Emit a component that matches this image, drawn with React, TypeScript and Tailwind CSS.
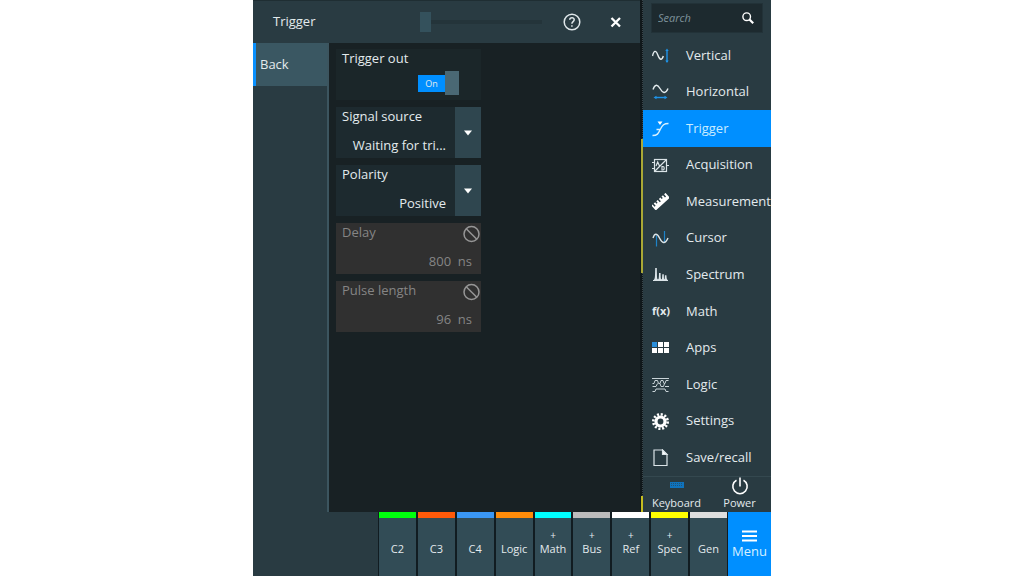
import { useState, type ReactNode } from 'react'
import { clsx } from 'clsx'

const icons: Record<string, ReactNode> = {
    vertical: (
        <g fill="none" strokeWidth="1.4">
            <path d="M0.5 9C2 3 4 3 5.800 8s4 6 5.500 1" stroke="#e4ecef" />
            <path d="M15 3v12" stroke="#1e93e8" />
            <path d="M13.300 4L15 1.500 16.700 4zM13.300 13.500l1.700 2.500 1.700-2.500z" fill="#1e93e8" stroke="none" />
        </g>
    ),
    horizontal: (
        <g fill="none" strokeWidth="1.4">
            <path d="M1 6.500C3 1 5.500 1 8 5.500s5.500 6 8 0" stroke="#e4ecef" />
            <path d="M3 14.500h11" stroke="#1e93e8" />
            <path d="M4.500 12.700L1.500 14.500l3 1.800zM12.500 12.700l3 1.800-3 1.800z" fill="#1e93e8" stroke="none" />
        </g>
    ),
    trigger: (
        <g>
            <path d="M0.5 15.500c5.500 0 6-2.500 8-6.500s3.500-5.500 8-5.500M4.500 9.500h4" fill="none" stroke="#d8f1ff" strokeWidth="1.400" />
            <path d="M5.500 1.500h5L8 5z" fill="#fff" />
        </g>
    ),
    acquisition: (
        <g fill="none" stroke="#dbe4e8" strokeWidth="1.200">
            <rect x="2.500" y="2.500" width="12" height="12" />
            <path d="M2.500 14.500l12-12M0 5.500h2.500M0 11.500h2.500M14.500 8.500H17M4 9l1.700-4L7.500 9M10 9.500v3.500h1c1.600 0 1.600-3.500 0-3.500z" />
        </g>
    ),
    measurement: (
        <g transform="rotate(-42 8.500 8.500)">
            <path d="M-1 5.500h1.500v3H2v-3h2v2h1.500v-2h2v3H9v-3h2v2h1.500v-2h2v3H16v-3h2V12H-1z" fill="#fff" />
        </g>
    ),
    cursor: (
        <g fill="none">
            <path d="M4.500 5.500v11M12.500 1v11" stroke="#1e83c8" strokeWidth="1.200" />
            <path d="M1 8C2.500 3 5 3 7.500 8s5.500 7 8.500 0" stroke="#dbe4e8" strokeWidth="1.400" />
        </g>
    ),
    spectrum: (
        <g fill="#dbe4e8">
            <path d="M1 14c2 0 2-2 2.200-12h1.600C5 12.500 5 13 6 13.300c.8 0 .9-1 1-6.300h1.600c.1 5 .2 6.300.9 6.300.6 0 .6-2 .8-5h1.500c.1 4 .2 5 .6 5 .3 0 .4-1 .5-4h1.500c.2 3.500.6 4.700 1.600 4.700v1H1z" />
        </g>
    ),
    apps: (
        <g fill="#fff">
            <rect x="0" y="3" width="5" height="5" fill="#2a8fdc" />
            <rect x="6" y="3" width="5" height="5" />
            <rect x="12" y="3" width="5" height="5" />
            <rect x="0" y="9" width="5" height="5" />
            <rect x="6" y="9" width="5" height="5" />
            <rect x="12" y="9" width="5" height="5" />
        </g>
    ),
    logic: (
        <g fill="none" stroke="#c9d4d8">
            <path d="M0 2.500h17M0.500 7.500H2l1-3h2.500l1 3H8l1-3h2l1 3h1l1-3h2.500M0.500 10.500h3.500l1.500-3M8 7.500l1 3h2.500l1-3M13 10.500h4M0.500 15.500H3l1-2.500h9l1 2.500h2.500" />
        </g>
    ),
    settings: (
        <g fill="none" stroke="#fff">
            <circle cx="8.500" cy="8.500" r="4.500" strokeWidth="3.200" />
            <circle cx="8.500" cy="8.500" r="7.200" strokeWidth="2.600" strokeDasharray="2.070 1.700" />
        </g>
    ),
    save: (
        <g fill="none" stroke="#dbe4e8" strokeWidth="1.200">
            <path d="M2 1h8.500L15 5.500V16.500H2z" />
            <path d="M10.500 1v4.500H15z" fill="#fff" />
        </g>
    ),
}

const menuItems = [
    { name: 'Vertical', icon: 'vertical' },
    { name: 'Horizontal', icon: 'horizontal' },
    { name: 'Trigger', icon: 'trigger' },
    { name: 'Acquisition', icon: 'acquisition' },
    { name: 'Measurement', icon: 'measurement' },
    { name: 'Cursor', icon: 'cursor' },
    { name: 'Spectrum', icon: 'spectrum' },
    { name: 'Math', icon: 'math' },
    { name: 'Apps', icon: 'apps' },
    { name: 'Logic', icon: 'logic' },
    { name: 'Settings', icon: 'settings' },
    { name: 'Save/recall', icon: 'save' },
]

const channels = [
    { name: 'C2', color: 'bg-[#00ff0d]' },
    { name: 'C3', color: 'bg-[#ff5a0a]' },
    { name: 'C4', color: 'bg-[#3a97f5]' },
    { name: 'Logic', color: 'bg-[#ff8c0a]' },
    { name: 'Math', color: 'bg-[#00ffff]', add: true },
    { name: 'Bus', color: 'bg-[#bcbcbc]', add: true },
    { name: 'Ref', color: 'bg-white', add: true },
    { name: 'Spec', color: 'bg-[#ffff00]', add: true },
    { name: 'Gen', color: 'bg-[#dedede]' },
]

function SelectField({ id, label, options }: { id: string; label: string; options: string[] }) {
    return (
        <div className="flex h-[51px] bg-[#1d2a2f]">
            <div className="flex min-w-0 flex-1 flex-col">
                <label htmlFor={id} className="pl-1.5 leading-[18px]">{label}</label>
                <select
                    id={id}
                    className="mt-2 h-6 w-full appearance-none bg-transparent pr-[9px] leading-6 outline-none [text-align-last:right]"
                >
                    {options.map((o) => <option key={o}>{o}</option>)}
                </select>
            </div>
            <div className="flex w-[26px] items-center justify-center bg-[#2f464f]">
                <svg className="h-1.5 w-2" viewBox="0 0 8 6"><path d="M0 0.500h8L4 5.500z" fill="#fff" /></svg>
            </div>
        </div>
    )
}

function DisabledField({ id, label, value }: { id: string; label: string; value: string }) {
    return (
        <div className="flex h-[51px] flex-col bg-[#303030] text-[#858585]">
            <div className="flex h-[18px] justify-between pl-1.5">
                <label htmlFor={id} className="leading-[18px]">{label}</label>
                <svg className="mt-0.5 h-[18px] w-[18px]" viewBox="0 0 18 18" fill="none" stroke="#969696" strokeWidth="1.500">
                    <circle cx="8.500" cy="9" r="7.500" />
                    <path d="M3.200 3.700l10.600 10.600" />
                </svg>
            </div>
            <input id={id} disabled value={value} readOnly className="mt-2 h-6 w-full bg-transparent pr-[9px] text-right" />
        </div>
    )
}

function Panel() {
    const [on, setOn] = useState(true)

    return (
        <div className="flex min-w-0 flex-1 flex-col">
            <header className="flex h-[43px] items-center border-t border-[#1f2e33] bg-[#293b42] pl-5 pr-3.5">
                <h1 className="flex-1">Trigger</h1>
                <input
                    type="range"
                    aria-label="Transparency"
                    defaultValue={0}
                    className="h-[22px] w-[122px] appearance-none bg-transparent [&::-webkit-slider-runnable-track]:h-1 [&::-webkit-slider-runnable-track]:bg-[#24343a] [&::-webkit-slider-thumb]:-mt-2 [&::-webkit-slider-thumb]:h-5 [&::-webkit-slider-thumb]:w-[11px] [&::-webkit-slider-thumb]:appearance-none [&::-webkit-slider-thumb]:bg-[#34515c]"
                />
                <button aria-label="Help" className="ml-5">
                    <svg className="h-5 w-5" viewBox="0 0 20 20" fill="none" stroke="#dfe7ea" strokeWidth="1.500">
                        <circle cx="10" cy="10" r="7.800" />
                        <path d="M7.700 7.700C7.900 5 12.300 5 12.200 7.800c0 1.800-2.300 1.900-2.300 4" />
                        <path d="M9.900 13.200v1.600" />
                    </svg>
                </button>
                <button aria-label="Close" className="ml-6">
                    <svg className="h-5 w-5" viewBox="0 0 20 20" fill="none" stroke="#fff" strokeWidth="2.300">
                        <path d="M5.500 6l8.500 8.500M14 6L5.500 14.500" />
                    </svg>
                </button>
            </header>
            <div className="flex flex-1">
                <nav className="w-[76px] border-r-2 border-[#3c555f] bg-[#293b42]">
                    <button className="h-[43px] w-full border-l-[3px] border-[#0a91ff] bg-[#3a5762] pl-1 text-left">Back</button>
                </nav>
                <main className="flex-1 bg-[#182124] px-[7px] py-1.5">
                    <div className="flex w-[145px] flex-col gap-[7px]">
                        <div className="h-[51px] bg-[#1b2629] pl-1.5">
                            <label htmlFor="trigger-out" className="block leading-[18px]">Trigger out</label>
                            <label className="ml-[76px] mt-1 flex h-6 w-fit items-center">
                                <input
                                    id="trigger-out"
                                    type="checkbox"
                                    className="sr-only"
                                    checked={on}
                                    onChange={() => setOn(!on)}
                                />
                                <span className="h-[17px] w-[27px] bg-[#008fff] text-center text-[9px] leading-[17px]">
                                    {on ? 'On' : 'Off'}
                                </span>
                                <span className="h-6 w-3.5 bg-[#4a6874]" />
                            </label>
                        </div>
                        <SelectField id="source" label="Signal source" options={['Waiting for tri...']} />
                        <SelectField id="polarity" label="Polarity" options={['Positive', 'Negative']} />
                        <DisabledField id="delay" label="Delay" value="800  ns" />
                        <DisabledField id="pulse" label="Pulse length" value="96  ns" />
                    </div>
                </main>
            </div>
        </div>
    )
}

// sliver of the waveform display left visible between the panel and the menu
function Trace() {
    return (
        <div className="flex w-[3px] flex-col bg-[#10181b]">
            <div className="flex-[139] border-r border-dotted border-[#3b474c]" />
            <div className="flex-[134] border-r-2 border-[#a9a835]" />
            <div className="flex-[223] border-r border-dotted border-[#3b474c]" />
            <div className="flex-[16] border-r-2 border-[#c5bd20]" />
        </div>
    )
}

function SideMenu() {
    const [active, setActive] = useState('Trigger')

    return (
        <aside className="flex w-32 flex-col bg-[#293b42]">
            <div className="px-2 pb-1 pt-[3px]">
                <div className="flex h-[30px] items-center border border-[#223238] bg-[#1d2a2f] pl-1.5 pr-2">
                    <input
                        type="search"
                        aria-label="Search"
                        placeholder="Search"
                        className="min-w-0 flex-1 bg-transparent text-[11px] italic outline-none placeholder:text-[#7d929b]"
                    />
                    <svg className="h-3 w-3" viewBox="0 0 12 12" fill="none" stroke="#fff">
                        <circle cx="4.700" cy="4.700" r="3.800" strokeWidth="1.400" />
                        <path d="M7.500 7.500l3.700 3.700" strokeWidth="2.200" />
                    </svg>
                </div>
            </div>
            <nav className="flex flex-1 flex-col">
                {menuItems.map((item) => (
                    <button
                        key={item.name}
                        onClick={() => setActive(item.name)}
                        className={clsx(
                            'flex flex-1 items-center gap-[17px] pl-[9px] text-left',
                            active === item.name && 'bg-[#008fff] text-[#c9ecff]'
                        )}
                    >
                        {item.icon === 'math' ? (
                            <span className="w-[17px] text-[11px] font-bold">f(x)</span>
                        ) : (
                            <svg className="h-[17px] w-[17px] shrink-0" viewBox="0 0 17 17">{icons[item.icon]}</svg>
                        )}
                        <span>{item.name}</span>
                    </button>
                ))}
            </nav>
            <div className="flex h-9 border-t border-[#34484f] pb-px pl-0.5 text-[11px] leading-4">
                <button className="flex flex-1 flex-col items-center justify-end">
                    <svg className="mb-1.5 h-2 w-3.5" viewBox="0 0 14 8">
                        <rect width="14" height="6" y="1" fill="#0f73bd" />
                        <path d="M1 2.500h12M1 4.500h12" stroke="#2a4656" strokeDasharray="1 1" strokeWidth="0.700" />
                    </svg>
                    Keyboard
                </button>
                <button className="flex flex-1 flex-col items-center justify-end">
                    <svg className="h-[18px] w-[18px]" viewBox="0 0 18 18" fill="none" stroke="#fff" strokeWidth="1.600">
                        <path d="M5.500 3.200a7.200 7.200 0 1 0 7 0M9 0.500v9" />
                    </svg>
                    Power
                </button>
            </div>
        </aside>
    )
}

function ChannelBar() {
    return (
        <footer className="flex h-16 bg-[#293b42] text-[11px]">
            <div className="w-[125px]" />
            <div className="flex flex-1 bg-[#111c21]">
                {channels.map((ch) => (
                    <button key={ch.name} className="flex flex-1 flex-col border-l border-[#111c21] pr-px">
                        <span className={clsx('h-1.5 w-full', ch.color)} />
                        <span className="flex w-full flex-1 flex-col items-center justify-end bg-[#324c56] pb-5 leading-[15px]">
                            {ch.add && <span className="text-[10px] leading-3">+</span>}
                            <span>{ch.name}</span>
                        </span>
                    </button>
                ))}
            </div>
            <button className="flex w-[43px] flex-col items-center justify-end bg-[#008fff] pb-4 text-[13px] leading-[18px] text-[#d5f0ff]">
                <svg className="h-3 w-[15px]" viewBox="0 0 15 12">
                    <path d="M0 1.500h15M0 6h15M0 10.500h15" stroke="#fff" strokeWidth="1.800" />
                </svg>
                Menu
            </button>
        </footer>
    )
}

export default function App() {
    return (
        <div className="min-h-screen bg-white">
            <div className="mx-auto flex min-h-screen w-full max-w-[518px] flex-col font-['Open_Sans',sans-serif] text-[13px] text-[#e3eaed]">
                <div className="flex flex-1">
                    <Panel />
                    <Trace />
                    <SideMenu />
                </div>
                <ChannelBar />
            </div>
        </div>
    )
}
